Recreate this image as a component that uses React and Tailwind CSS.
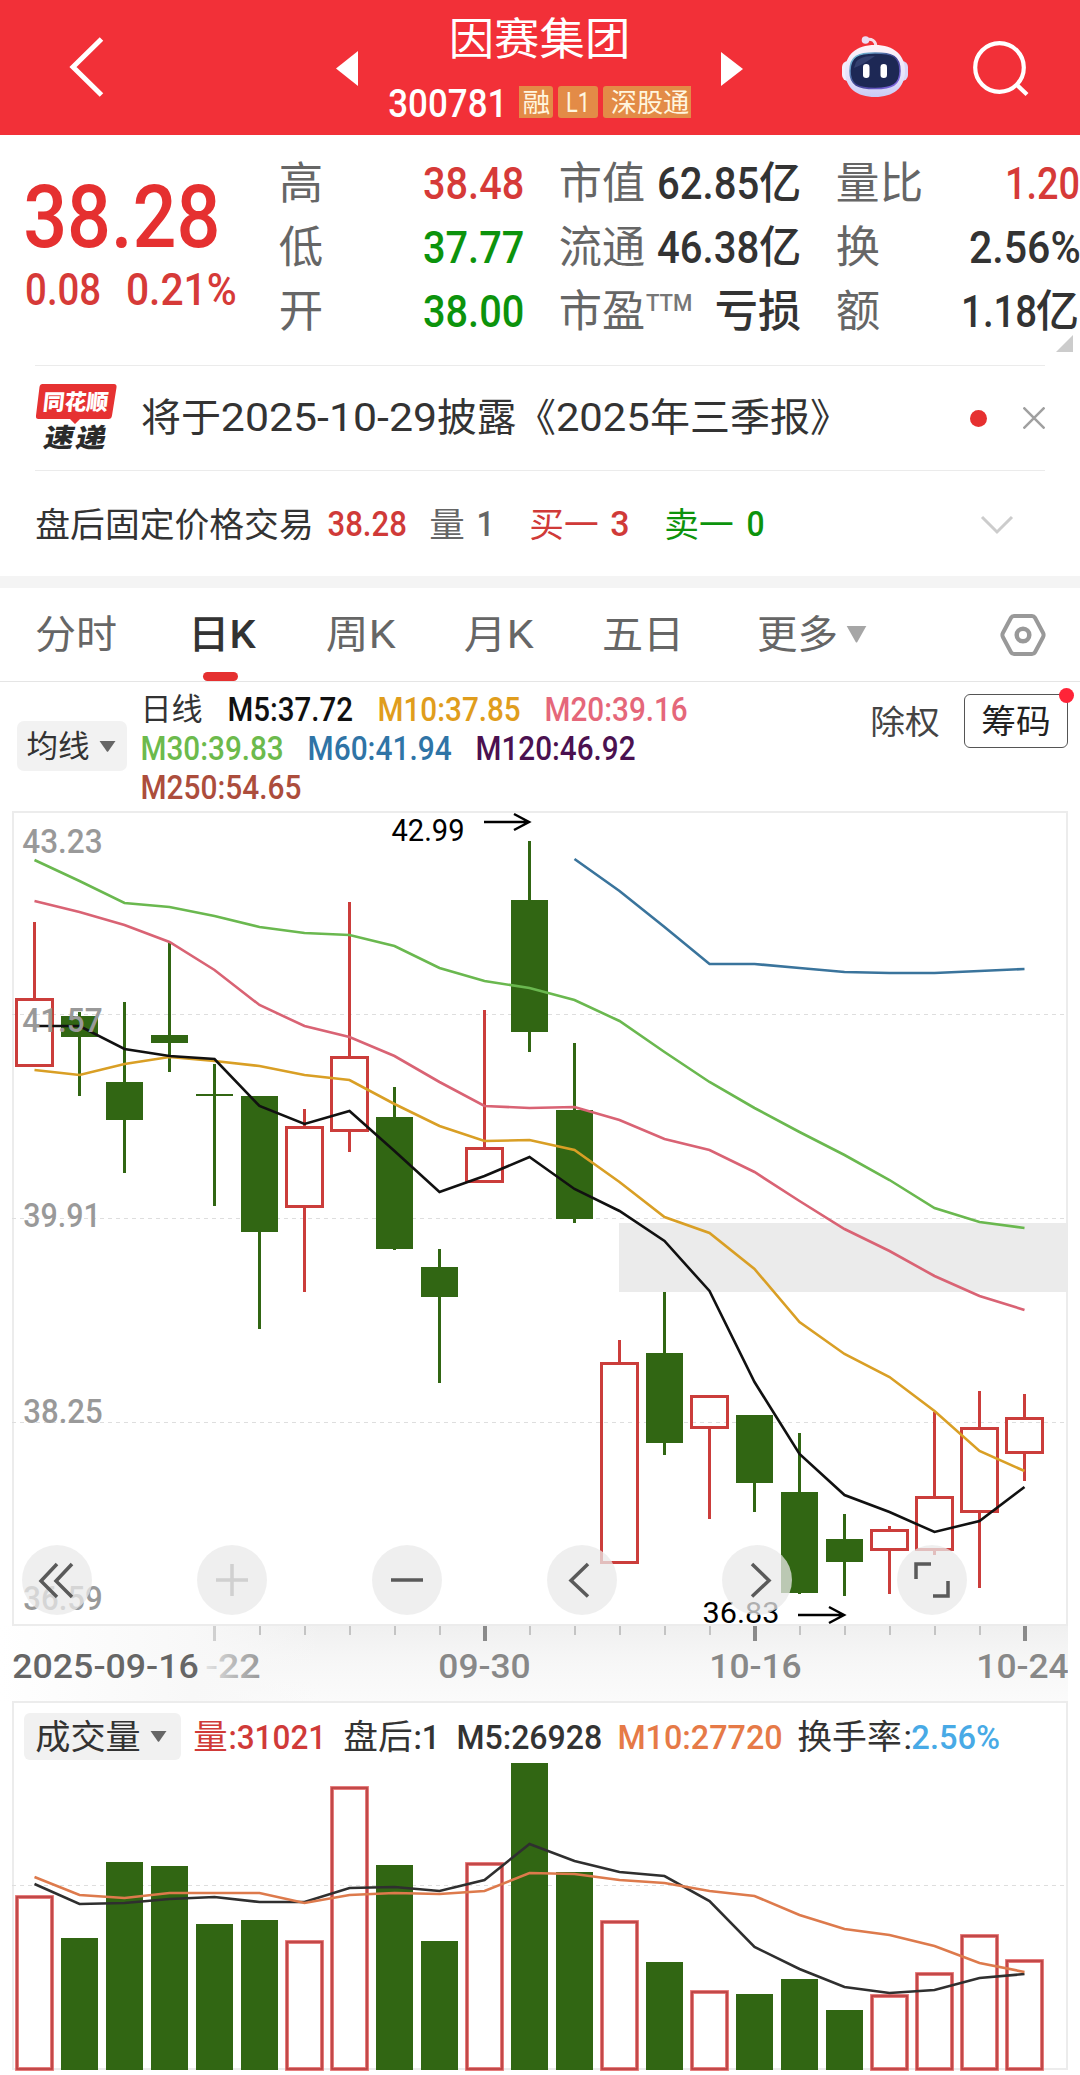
import React, {useLayoutEffect, useRef, useState} from 'react';

const GREEN = "#316613"
const RED = "#cb3d3b"

// x of the candle with the given index
const cx = (i) => 34.5 + i * 45

// kind, high, body top, body bottom, low
const candles = [
    ["r", 922, 998, 1067, 1067],
    ["g", 1012, 1016, 1037, 1096],
    ["g", 1002, 1082, 1120, 1173],
    ["g", 943, 1035, 1043, 1072],
    ["g", 1064, 1094, 1096, 1206],
    ["g", 1096, 1096, 1232, 1329],
    ["r", 1109, 1126, 1208, 1292],
    ["r", 902, 1056, 1132, 1152],
    ["g", 1087, 1117, 1249, 1250],
    ["g", 1249, 1267, 1297, 1383],
    ["r", 1010, 1147, 1183, 1183],
    ["g", 841, 900, 1032, 1052],
    ["g", 1043, 1110, 1219, 1223],
    ["r", 1340, 1362, 1564, 1564],
    ["g", 1292, 1353, 1443, 1455],
    ["r", 1395, 1395, 1429, 1519],
    ["g", 1415, 1415, 1483, 1512],
    ["g", 1433, 1492, 1593, 1594],
    ["g", 1514, 1539, 1562, 1596],
    ["r", 1526, 1529, 1551, 1594],
    ["r", 1412, 1496, 1551, 1555],
    ["r", 1391, 1427, 1513, 1588],
    ["r", 1394, 1417, 1454, 1481],
]

const averages = [
    {color: "#3a749c", from: 12, ys: [859, 891, 927, 964, 964, 968, 972, 973, 973, 971, 969]},
    {color: "#6ab84f", from: 0, ys: [860, 881, 903, 907, 916, 927, 933, 935, 946, 968, 981, 988, 1000, 1021, 1052, 1082, 1108, 1132, 1155, 1180, 1208, 1222, 1228]},
    {color: "#d96374", from: 0, ys: [901, 912, 925, 942, 970, 1005, 1026, 1037, 1056, 1082, 1106, 1108, 1107, 1120, 1139, 1150, 1172, 1201, 1229, 1251, 1276, 1296, 1310]},
    {color: "#d99f25", from: 0, ys: [1070, 1075, 1064, 1057, 1061, 1066, 1075, 1080, 1104, 1126, 1141, 1140, 1150, 1182, 1217, 1233, 1269, 1322, 1354, 1377, 1411, 1451, 1471]},
    {color: "#111111", from: 0, ys: [1026, 1026, 1049, 1056, 1059, 1106, 1124, 1111, 1151, 1192, 1176, 1157, 1189, 1211, 1241, 1291, 1382, 1454, 1495, 1512, 1532, 1521, 1487]},
]

const volumes = [1895, 1938, 1862, 1866, 1924, 1920, 1940, 1786, 1865, 1941, 1862, 1763, 1872, 1920, 1962, 1990, 1994, 1979, 2010, 1994, 1972, 1934, 1959]

const volumeAverages = [
    {color: "#2f2f2f", from: 0, ys: [1884, 1904, 1903, 1899, 1897, 1902, 1902, 1888, 1887, 1891, 1880, 1844, 1861, 1872, 1876, 1901, 1947, 1969, 1987, 1993, 1990, 1978, 1974]},
    {color: "#dd7a4c", from: 0, ys: [1877, 1895, 1898, 1893, 1893, 1893, 1903, 1895, 1893, 1894, 1891, 1873, 1874, 1880, 1883, 1891, 1896, 1915, 1929, 1935, 1946, 1963, 1972]},
]

// text squeezed or stretched to the width of its box
function Fit({className, children}) {
    const box = useRef(null)
    const text = useRef(null)
    const [transform, setTransform] = useState("none")

    useLayoutEffect(() => {
        const pad = parseFloat(getComputedStyle(text.current).fontSize) * 0.05
        const scale = box.current.clientWidth / (text.current.offsetWidth - pad * 2)
        setTransform("translateX(" + -pad * scale + "px) scaleX(" + scale + ")")
    }, [children])

    return (
        <span ref={box} className={"block shrink-0 whitespace-nowrap leading-none " + className}>
            <span ref={text} className="inline-block origin-left" style={{transform}}>{children}</span>
        </span>
    );
}

function Line({data}) {
    return <polyline points={data.ys.map((y, i) => cx(i + data.from) + "," + y).join(" ")} fill="none" stroke={data.color} strokeWidth="2.6"/>
}

function Caret({className}) {
    return <svg className={className} viewBox="0 0 16 11" preserveAspectRatio="none" fill="currentColor"><path d="M0.5 0h15L8.6 10.4a.8.8 0 0 1-1.2 0z"/></svg>
}

function Header() {
    return (
        <div className="flex h-[135px] bg-[#f23038] text-white">
            <svg className="ml-[66px] mt-[34px] h-[66px] w-[42px]" viewBox="66 34 42 66" fill="none" stroke="white" strokeWidth="5">
                <path d="M101.5 39 73 67l28.500 28"/>
            </svg>
            <svg className="ml-[228px] mt-[51px] h-[36px] w-[22px]" viewBox="0 0 22 36" fill="white"><path d="M22 0v35L0 17.500z"/></svg>
            <div className="ml-[32px] flex w-[301px] flex-col">
                <Fit className="ml-[61px] mt-[18px] w-[177px] text-[44px]">因赛集团</Fit>
                <div className="mt-[24px] flex h-[32px] items-center">
                    <Fit className="mt-[3px] w-[116px] text-[38px] font-medium">300781</Fit>
                    <div className="ml-[13px] flex gap-[5px] text-[26px] text-[#fff6df]">
                        <div className="flex h-[32px] w-[34px] items-center justify-center rounded-r-[3px] bg-[#e38b47] pt-[2px]"><Fit className="w-[25px]">融</Fit></div>
                        <div className="flex h-[32px] w-[40px] items-center justify-center rounded-[3px] bg-[#e38b47] pt-px"><Fit className="w-[22px] text-[28px]">L1</Fit></div>
                        <div className="flex h-[32px] w-[88px] items-center justify-end rounded-l-[3px] bg-[#e38b47] pr-[3px] pt-[2px]"><Fit className="w-[76px]">深股通</Fit></div>
                    </div>
                </div>
            </div>
            <svg className="ml-[30px] mt-[52px] h-[34px] w-[22px]" viewBox="0 0 22 34" fill="white"><path d="M0 0v34L22 17z"/></svg>
            <Robot/>
            <svg className="ml-[61px] mt-[36px] h-[64px] w-[64px]" viewBox="969 36 64 64" fill="none" stroke="white" strokeWidth="4.200">
                <circle cx="999.500" cy="67.500" r="24.300"/>
                <path d="M1016.500 84.500l10.500 10"/>
            </svg>
        </div>
    );
}

function Robot() {
    return (
        <svg className="ml-[97px] mt-[34px] h-[66px] w-[68px]" viewBox="840 34 68 66">
            <defs>
                <linearGradient id="shell" x1="0" y1="0" x2="0" y2="1">
                    <stop offset="0" stopColor="#fff4f8"/>
                    <stop offset=".6" stopColor="#e6e2fb"/>
                    <stop offset="1" stopColor="#c9cbf5"/>
                </linearGradient>
                <linearGradient id="rim" x1="0" y1="0" x2="1" y2="1">
                    <stop offset="0" stopColor="#7fd6e6"/>
                    <stop offset=".5" stopColor="#3c3f8c"/>
                    <stop offset="1" stopColor="#8b6cf0"/>
                </linearGradient>
            </defs>
            <path d="M866 39.500c6-1 9.500 1 10 7" fill="none" stroke="#f6dfe8" strokeWidth="3"/>
            <circle cx="865.500" cy="40" r="3.800" fill="#ecdcf3"/>
            <rect x="842" y="61" width="12" height="20" rx="6" fill="#f3eefc"/>
            <rect x="896" y="61" width="12" height="20" rx="6" fill="#d9d6f8"/>
            <path d="M875 45c19 0 30 10 30 26 0 17-12 26-30 26s-30-9-30-26c0-16 11-26 30-26z" fill="url(#shell)"/>
            <path d="M875 53c17 0 25 3 25 18 0 14-8 17.500-25 17.500S850 85 850 71c0-15 8-18 25-18z" fill="#1d2855" stroke="url(#rim)" strokeWidth="1.500"/>
            <path d="M856 62c4-5 10-6 19-6-6 4-13 9-21 12z" fill="#33406f"/>
            <rect x="863" y="64" width="6.500" height="14" rx="3.200" fill="white"/>
            <rect x="880.500" y="64" width="6.500" height="14" rx="3.200" fill="white"/>
        </svg>
    );
}

function Quote() {
    return (
        <div className="flex h-[230px] text-[44px] text-[#333]">
            <div className="ml-[27px] w-[254px] text-[#e53030]">
                <Fit className="mt-[37px] h-[88px] w-[190px] pt-px text-[88px] font-medium">38.28</Fit>
                <div className="mt-[8px] flex font-medium text-[#d63a38]">
                    <Fit className="w-[72px]">0.08</Fit>
                    <Fit className="ml-[29px] w-[107px]">0.21%</Fit>
                </div>
            </div>
            <div className="mt-[17px] grid h-[192px] w-[241px] grid-rows-3 font-medium">
                <div className="flex items-center justify-between text-[#d63a38]"><Fit className="w-[40px] font-normal text-[#666]">高</Fit><Fit className="w-[97px]">38.48</Fit></div>
                <div className="flex items-center justify-between text-[#0c930c]"><Fit className="w-[40px] font-normal text-[#666]">低</Fit><Fit className="w-[97px]">37.77</Fit></div>
                <div className="flex items-center justify-between text-[#0c930c]"><Fit className="w-[40px] font-normal text-[#666]">开</Fit><Fit className="w-[97px]">38.00</Fit></div>
            </div>
            <div className="ml-[39px] mt-[17px] grid h-[192px] w-[239px] grid-rows-3 font-medium">
                <div className="flex items-center"><Fit className="w-[82px] font-normal text-[#666]">市值</Fit><Fit className="ml-[16px] w-[98px]">62.85</Fit><Fit className="ml-[4px] w-[38px]">亿</Fit></div>
                <div className="flex items-center"><Fit className="w-[82px] font-normal text-[#666]">流通</Fit><Fit className="ml-[16px] w-[98px]">46.38</Fit><Fit className="ml-[4px] w-[38px]">亿</Fit></div>
                <div className="flex items-center"><Fit className="w-[82px] font-normal text-[#666]">市盈</Fit><Fit className="mb-[18px] ml-[4px] w-[44px] text-[23px] text-[#777]">TTM</Fit><Fit className="ml-[26px] w-[82px]">亏损</Fit></div>
            </div>
            <div className="ml-[38px] mt-[17px] grid h-[192px] w-[241px] grid-rows-3 font-medium">
                <div className="flex items-center justify-between"><Fit className="w-[83px] font-normal text-[#666]">量比</Fit><Fit className="mr-[1px] w-[71px] text-[#d63a38]">1.20</Fit></div>
                <div className="flex items-center justify-between"><Fit className="w-[40px] font-normal text-[#666]">换</Fit><Fit className="w-[108px]">2.56%</Fit></div>
                <div className="flex items-center"><Fit className="w-[40px] font-normal text-[#666]">额</Fit><Fit className="ml-[85px] w-[72px]">1.18</Fit><Fit className="ml-[3px] w-[39px]">亿</Fit></div>
            </div>
            <svg className="-ml-[23px] mt-[200px] h-[17px] w-[17px] shrink-0" viewBox="0 0 17 17" fill="#ccc"><path d="M17 0v17H0z"/></svg>
        </div>
    );
}

function News() {
    return (
        <div className="mx-[35px] flex h-[106px] items-center border-y border-[#ebebeb]">
            <div className="relative h-[68px] w-[82px]">
                <svg className="absolute left-0 top-0 h-[42px] w-[82px]" viewBox="0 0 82 42" fill="#e63232"><path d="M7.500 0H79q3 0 2.500 3.500L77 31.500q-.5 3.500-3.500 3.500H45l-5 5-5-5H3.500Q.5 35 1 31.500L4.500 3Q5 0 7.500 0z"/></svg>
                <div className="absolute left-[9px] top-[8px] -skew-x-6 text-[22px] font-black text-white"><Fit className="w-[63px]">同花顺</Fit></div>
                <div className="absolute left-[11px] top-[41px] flex -skew-x-12 gap-[5px] text-[26px] font-black text-[#2b2b2b]"><Fit className="w-[27px]">速</Fit><Fit className="w-[27px]">递</Fit></div>
            </div>
            <div className="ml-[26px] flex text-[39px] text-[#333]">
                <Fit className="w-[76px]">将于</Fit>
                <Fit className="ml-[4px] w-[212px]">2025-10-29</Fit>
                <Fit className="ml-[4px] w-[115px]">披露《</Fit>
                <Fit className="ml-[4px] w-[90px]">2025</Fit>
                <Fit className="ml-[4px] w-[196px]">年三季报》</Fit>
            </div>
            <div className="ml-auto mr-[36px] size-[17px] rounded-full bg-[#e63030]"></div>
            <svg className="size-[22px]" viewBox="0 0 22 22" stroke="#a0a0a0" strokeWidth="2.500"><path d="M.5.5l21 21M21.500.5l-21 21"/></svg>
        </div>
    );
}

function AfterHours() {
    return (
        <div className="flex h-[105px] items-center pl-[37px] pt-[2px] text-[34px] text-[#333]">
            <Fit className="w-[275px]">盘后固定价格交易</Fit>
            <Fit className="ml-[17px] w-[76px] text-[35px] font-medium text-[#d03a38]">38.28</Fit>
            <Fit className="ml-[26px] w-[32px] text-[#666]">量</Fit>
            <Fit className="ml-[15px] w-[15px] text-[35px] font-medium text-[#666]">1</Fit>
            <Fit className="ml-[38px] w-[66px] text-[#d03a38]">买一</Fit>
            <Fit className="ml-[15px] w-[16px] text-[35px] font-medium text-[#d03a38]">3</Fit>
            <Fit className="ml-[38px] w-[66px] text-[#0c930c]">卖一</Fit>
            <Fit className="ml-[16px] w-[15px] text-[35px] font-medium text-[#0c930c]">0</Fit>
            <svg className="ml-[217px] h-[20px] w-[34px]" viewBox="0 0 34 20" fill="none" stroke="#ccc" strokeWidth="3"><path d="M2 2l15 15L32 2"/></svg>
        </div>
    );
}

function Tabs() {
    return (
        <div className="flex h-[94px] items-center border-b border-[#e5e5e5] pl-[37px] text-[39px] text-[#666]">
            <Fit className="mt-px w-[78px]">分时</Fit>
            <div className="relative ml-[75px] flex h-full items-center font-medium text-[#333]">
                <Fit className="mt-px w-[64px]">日K</Fit>
                <div className="absolute bottom-0 left-[13px] h-[9px] w-[35px] rounded-full bg-[#e53030]"></div>
            </div>
            <Fit className="ml-[74px] mt-px w-[65px]">周K</Fit>
            <Fit className="ml-[73px] mt-px w-[65px]">月K</Fit>
            <Fit className="ml-[73px] mt-px w-[78px]">五日</Fit>
            <Fit className="ml-[77px] mt-px w-[77px]">更多</Fit>
            <Caret className="ml-[10px] h-[17px] w-[21px] text-[#a6a6a6]"/>
            <svg className="ml-[133px] h-[44px] w-[46px]" viewBox="0 0 46 44" fill="none" stroke="#999" strokeWidth="4">
                <path d="M14 3h18q2 0 3 1.800l8 15q1.200 2.200 0 4.400l-8 15Q34 41 32 41H14q-2 0-3-1.800l-8-15q-1.200-2.200 0-4.400l8-15Q12 3 14 3z"/>
                <circle cx="23" cy="22" r="6.300" strokeWidth="4.500"/>
            </svg>
        </div>
    );
}

function AverageLegend() {
    return (
        <div className="flex h-[129px] text-[33px]">
            <div className="ml-[17px] mt-[39px] flex h-[50px] w-[110px] items-center rounded-[7px] bg-[#f2f2f2] pl-[11px] text-[31px] text-[#333]">
                <Fit className="w-[60px]">均线</Fit>
                <Caret className="ml-[11px] h-[11px] w-[17px] text-[#666]"/>
            </div>
            <div className="ml-[15px] mt-[8px] w-[562px] font-medium">
                <div className="flex h-[39px] items-center">
                    <Fit className="w-[59px] text-[31px] font-normal text-[#333]">日线</Fit>
                    <Fit className="ml-[28px] w-[123px] text-[#111]">M5:37.72</Fit>
                    <Fit className="ml-[27px] w-[140px] text-[#e09d1c]">M10:37.85</Fit>
                    <Fit className="ml-[27px] w-[140px] text-[#e5677a]">M20:39.16</Fit>
                </div>
                <div className="flex h-[39px] items-center">
                    <Fit className="w-[140px] text-[#6cba4c]">M30:39.83</Fit>
                    <Fit className="ml-[27px] w-[141px] text-[#2f74a6]">M60:41.94</Fit>
                    <Fit className="ml-[27px] w-[157px] text-[#4b1150]">M120:46.92</Fit>
                </div>
                <div className="flex h-[39px] items-center">
                    <Fit className="w-[158px] text-[#ac4d3c]">M250:54.65</Fit>
                </div>
            </div>
            <Fit className="ml-[168px] mt-[24px] w-[66px] text-[33px] text-[#444]">除权</Fit>
            <div className="relative ml-[26px] mt-[12px] flex h-[54px] w-[104px] items-center justify-center rounded-[6px] border border-[#555] text-[33px] text-[#222]">
                <Fit className="w-[66px]">筹码</Fit>
                <div className="absolute -right-[7px] -top-[7px] size-[15px] rounded-full bg-[#ff2438]"></div>
            </div>
        </div>
    );
}

function ChartText({x, y, w, size, color, children, weight}) {
    return <text x={x - size * 0.05} y={y} fontSize={size} fill={color} fontWeight={weight || 500} textLength={w + size * 0.1} lengthAdjust="spacingAndGlyphs">{children}</text>
}

function CandleChart() {
    return (
        <svg className="block h-[815px] w-[1056px] overflow-visible" viewBox="12 811 1056 815">
            <rect x="13" y="812" width="1054" height="813" fill="none" stroke="#ececec" strokeWidth="2"/>
            {[1014.5, 1218.5, 1422.5].map((y) => <path key={y} d={"M12 " + y + "H1066"} stroke="#dedede" strokeDasharray="4 4"/>)}
            <rect x="619" y="1223" width="449" height="69" fill="#ebebeb"/>
            {candles.map(([kind, high, top, bottom, low], i) => kind === "g" ? (
                <g key={i} fill={GREEN}>
                    <rect x={cx(i) - 1.5} y={high} width="3" height={low - high}/>
                    <rect x={cx(i) - 18.5} y={top} width="37" height={bottom - top}/>
                </g>
            ) : (
                <g key={i} fill={RED}>
                    <rect x={cx(i) - 1.5} y={high} width="3" height={top - high}/>
                    <rect x={cx(i) - 1.5} y={bottom} width="3" height={low - bottom}/>
                    <rect x={cx(i) - 18} y={top + 1.5} width="36" height={bottom - top - 3} fill="none" stroke={RED} strokeWidth="3"/>
                </g>
            ))}
            {averages.map((data) => <Line key={data.color} data={data}/>)}
            <ChartText x={24} y={853} w={77} size={34} color="#999">43.23</ChartText>
            <ChartText x={24} y={1032} w={77} size={34} color="#999">41.57</ChartText>
            <ChartText x={25} y={1227} w={74} size={34} color="#999">39.91</ChartText>
            <ChartText x={25} y={1423} w={76} size={34} color="#999">38.25</ChartText>
            <ChartText x={25} y={1610} w={76} size={34} color="#999">36.59</ChartText>
            <ChartText x={393} y={841} w={70} size={31} color="#000" weight={400}>42.99</ChartText>
            <ChartText x={704} y={1623} w={74} size={29} color="#000" weight={400}>36.83</ChartText>
            <path d="M484 822h44M514 814l15 8-15 8M798 1615h46M829 1607l15 8-15 8" fill="none" stroke="#000" strokeWidth="2.500"/>
        </svg>
    );
}

const tools = [
    {name: "first", d: "M35 19 19 36l16 16M50 19 34 36l16 16", color: "#5a5a5a"},
    {name: "zoom in", d: "M19 35h32M35 19v32", color: "#d0d0d0"},
    {name: "zoom out", d: "M19 35h32", color: "#5a5a5a"},
    {name: "previous", d: "M41 19 24 35.500l17 16", color: "#5a5a5a"},
    {name: "next", d: "M30 19 47 35.500l-17 16", color: "#5a5a5a"},
    {name: "full screen", d: "M19 34V19h15M51 36v15H36", color: "#5a5a5a"},
]

function Tools() {
    return (
        <div className="absolute left-[10px] top-[734px] flex gap-[105px]">
            {tools.map((tool) => (
                <button key={tool.name} aria-label={tool.name} className="size-[70px] rounded-full bg-[#e9e9e9]/75">
                    <svg className="size-[70px]" viewBox="0 0 70 70" fill="none" stroke={tool.color} strokeWidth="3.500"><path d={tool.d}/></svg>
                </button>
            ))}
        </div>
    );
}

function DateAxis() {
    return (
        <svg className="block h-[75px] w-[1068px]" viewBox="0 1626 1068 75">
            <defs>
                <linearGradient id="shade" x1="0" y1="0" x2="0" y2="1">
                    <stop offset="0" stopColor="#f0f0f0"/>
                    <stop offset=".5" stopColor="#f7f7f7"/>
                    <stop offset="1" stopColor="#fbfbfb"/>
                </linearGradient>
                <linearGradient id="fade" x1="0" y1="0" x2="1" y2="0">
                    <stop offset="0" stopColor="#fff"/>
                    <stop offset=".18" stopColor="#f8f8f8"/>
                    <stop offset=".3" stopColor="#f8f8f8" stopOpacity="0"/>
                </linearGradient>
                <linearGradient id="date" x1="0" y1="0" x2="1" y2="0">
                    <stop offset="0" stopColor="#e4e4e4"/>
                    <stop offset=".5" stopColor="#bbb"/>
                    <stop offset="1" stopColor="#999"/>
                </linearGradient>
            </defs>
            <rect x="0" y="1626" width="1068" height="75" fill="url(#shade)"/>
            <rect x="0" y="1626" width="1068" height="75" fill="url(#fade)"/>
            {[5, 6, 7, 8, 9, 11, 12, 13, 14, 15, 17, 18, 19, 20, 21].map((i) => <rect key={i} x={cx(i) - 0.5} y="1626" width="2" height="9" fill="#c4c4c4"/>)}
            <rect x="213" y="1626" width="3" height="15" fill="#d0d0d0"/>
            {[10, 16, 22].map((i) => <rect key={i} x={cx(i) - 1.5} y="1626" width="4" height="15" fill="#8a8a8a"/>)}
            <ChartText x={14} y={1678} w={183} size={34} color="#666">2025-09-16</ChartText>
            <ChartText x={207} y={1678} w={52} size={34} color="url(#date)">-22</ChartText>
            <ChartText x={440} y={1678} w={89} size={34} color="#888">09-30</ChartText>
            <ChartText x={711} y={1678} w={89} size={34} color="#888">10-16</ChartText>
            <ChartText x={978} y={1678} w={89} size={34} color="#888">10-24</ChartText>
        </svg>
    );
}

function VolumePanel() {
    return (
        <div className="relative ml-[12px]">
            <svg className="block h-[374px] w-[1056px]" viewBox="12 1701 1056 374">
                <rect x="13" y="1702" width="1054" height="367" fill="none" stroke="#ececec" strokeWidth="2"/>
                <path d="M12 1885.500H1066" stroke="#dedede" strokeDasharray="4 4"/>
                {volumes.map((top, i) => candles[i][0] === "g" ? (
                    <rect key={i} x={cx(i) - 18.5} y={top} width="37" height={2070 - top} fill={GREEN}/>
                ) : (
                    <g key={i} fill="none">
                        <rect x={cx(i) - 17.5} y={top + 2} width="35" height={2067 - top} stroke="#e47070" strokeWidth="3.800"/>
                        <rect x={cx(i) - 17.5} y={top + 2} width="35" height={2067 - top} stroke="#b94040" strokeWidth="1.600"/>
                    </g>
                ))}
                {volumeAverages.map((data) => <Line key={data.color} data={data}/>)}
            </svg>
            <div className="absolute left-[12px] top-[12px] flex h-[47px] items-center text-[34px] text-[#333]">
                <div className="flex h-[47px] w-[157px] items-center rounded-[6px] bg-[#f1f1f1] pl-[13px]">
                    <Fit className="mt-px w-[102px]">成交量</Fit>
                    <Caret className="ml-[11px] h-[11px] w-[17px] text-[#666]"/>
                </div>
                <Fit className="ml-[14px] w-[31px] text-[#d03a38]">量</Fit>
                <Fit className="ml-[4px] w-[95px] font-medium text-[#d03a38]">:31021</Fit>
                <Fit className="ml-[20px] w-[66px]">盘后</Fit>
                <Fit className="ml-[4px] w-[23px] font-medium">:1</Fit>
                <Fit className="ml-[20px] w-[143px] font-medium">M5:26928</Fit>
                <Fit className="ml-[18px] w-[162px] font-medium text-[#e67a47]">M10:27720</Fit>
                <Fit className="ml-[18px] w-[101px]">换手率</Fit>
                <Fit className="ml-[5px] w-[5px]">:</Fit>
                <Fit className="ml-[3px] w-[85px] font-medium text-[#48aae6]">2.56%</Fit>
            </div>
        </div>
    );
}

export default function App() {
    return (
        <div className="h-[2075px] w-[1080px] overflow-hidden bg-white font-[Roboto,'Noto_Sans_CJK_SC',sans-serif]">
            <Header/>
            <Quote/>
            <News/>
            <AfterHours/>
            <div className="h-[12px] bg-[#f4f4f4]"></div>
            <Tabs/>
            <AverageLegend/>
            <div className="relative ml-[12px]">
                <CandleChart/>
                <Tools/>
            </div>
            <DateAxis/>
            <VolumePanel/>
        </div>
    );
}
